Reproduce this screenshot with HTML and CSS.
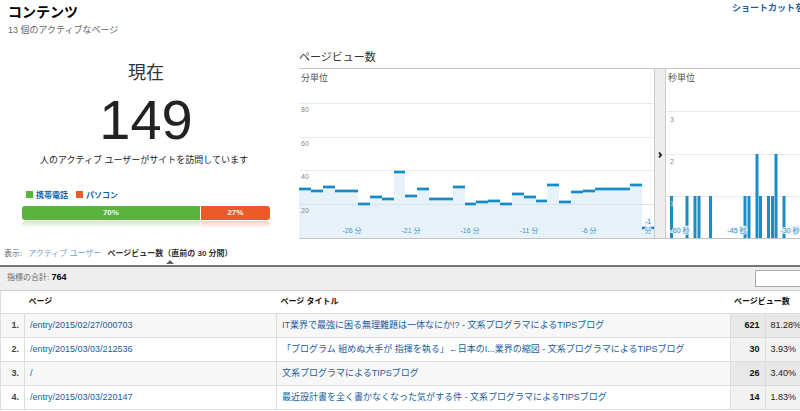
FILE: index.html
```html
<!DOCTYPE html>
<html lang="ja">
<head>
    <meta charset="UTF-8">
    <meta name="viewport" content="width=device-width, initial-scale=1.0">
    <title>コンテンツ</title>
    <link rel="stylesheet" href="styles.css">
</head>
<body>
    <header class="page-header">
        <div>
            <h1>コンテンツ</h1>
            <p class="subtitle">13 個のアクティブなページ</p>
        </div>
        <a class="shortcut" href="#shortcut">ショートカットを</a>
    </header>

    <main>
        <div class="overview">
            <section class="active-users">
                <h2>現在</h2>
                <p class="count">149</p>
                <p class="note">人のアクティブ ユーザーがサイトを訪問しています</p>
                <div class="legend">
                    <a class="mobile" href="#mobile">携帯電話</a>
                    <a class="desktop" href="#desktop">パソコン</a>
                </div>
                <div class="share">
                    <span class="share-mobile">70%</span>
                    <span class="share-desktop">27%</span>
                </div>
                <div class="reflection">
                    <span class="share-mobile"></span>
                    <span class="share-desktop"></span>
                </div>
            </section>

            <section class="pageviews">
                <h2>ページビュー数</h2>
                <div class="charts">
                    <svg class="minutes" viewBox="0 0 355 169" role="img" aria-label="分単位">
                        <path class="grid" d="M0 34.5H355M0 68.5H355M0 101.5H355"/>
                        <path class="area" d="M0 170V120H12V122H24V118H36V122H59V135H71V128H83V130H95V103H106V127H118V120H130V130H154V118H166V135H177V133H189V132H201V135H213V125H225V128H237V132H248V116H260V133H272V123H284V122H296V120H331V116H343V159H355V170Z"/>
                        <path class="grid grid-over" d="M0 135.5H355"/>
                        <path class="tick-halo" d="M0 120H12M12 122H24M24 118H36M36 122H59M59 135H71M71 128H83M83 130H95M95 103H106M106 127H118M118 120H130M130 130H154M154 118H166M166 135H177M177 133H189M189 132H201M201 135H213M213 125H225M225 128H237M237 132H248M248 116H260M260 133H272M272 123H284M284 122H296M296 120H331M331 116H343M343 159H355"/>
                        <path class="tick" d="M0 120H12M12 122H24M24 118H36M36 122H59M59 135H71M71 128H83M83 130H95M95 103H106M106 127H118M118 120H130M130 130H154M154 118H166M166 135H177M177 133H189M189 132H201M201 135H213M213 125H225M225 128H237M237 132H248M248 116H260M260 133H272M272 123H284M284 122H296M296 120H331M331 116H343M343 159H355"/>
                        <text class="name" x="2" y="12">分単位</text>
                        <text class="value" x="2" y="43">80</text>
                        <text class="value" x="2" y="77">60</text>
                        <text class="value" x="2" y="110">40</text>
                        <text class="value" x="2" y="144">20</text>
                        <text class="time" x="53" y="164">-26 分</text>
                        <text class="time" x="112" y="164">-21 分</text>
                        <text class="time" x="171" y="164">-16 分</text>
                        <text class="time" x="230" y="164">-11 分</text>
                        <text class="time" x="290" y="164">-6 分</text>
                        <text class="time" x="349" y="155">-1</text>
                        <text class="time" x="349" y="164">分</text>
                    </svg>
                    <button class="toggle" type="button" aria-label="切り替え">
                        <svg viewBox="0 0 4 6"><path d="M1 0.5L3 3L1 5.5"/></svg>
                    </button>
                    <svg class="seconds" viewBox="0 0 134 169" preserveAspectRatio="xMinYMin slice" role="img" aria-label="秒単位">
                        <path class="grid" d="M0 42.5H134M0 85.5H134M0 127.5H134"/>
                        <path class="bars" d="M4 127h3v43h-3zM19.500 127h3v43h-3zM27.500 127h3v43h-3zM31.500 127h3v43h-3zM43 127h3v43h-3zM77.500 127h3v43h-3zM81.500 127h3v43h-3zM89.500 85h3v85h-3zM93 127h3v43h-3zM101 127h3v43h-3zM105 127h3v43h-3zM108.500 85h3v85h-3zM116.500 127h3v43h-3z"/>
                        <text class="name" x="2" y="12">秒単位</text>
                        <text class="value" x="4" y="53">3</text>
                        <text class="value" x="4" y="95">2</text>
                        <text class="value value-over" x="4" y="137">1</text>
                        <text class="time" x="14" y="164">-60 秒</text>
                        <text class="time" x="71" y="164">-45 秒</text>
                        <text class="time" x="124" y="164">-30 秒</text>
                    </svg>
                </div>
            </section>
        </div>

        <nav class="view">
            <span>表示:</span>
            <a href="#users">アクティブ ユーザー</a>
            <strong>ページビュー数（直前の 30 分間）</strong>
        </nav>

        <div class="toolbar">
            <p>指標の合計: <strong>764</strong></p>
            <input type="text" aria-label="検索">
        </div>

        <table class="pages">
            <thead>
                <tr>
                    <th class="num"></th>
                    <th class="path">ページ</th>
                    <th class="title">ページ タイトル</th>
                    <th class="views" colspan="2">ページビュー数</th>
                </tr>
            </thead>
            <tbody>
                <tr>
                    <td class="num">1.</td>
                    <td><a href="#p1">/entry/2015/02/27/000703</a></td>
                    <td><a href="#t1">IT業界で最強に困る無理難題は一体なにか!? - 文系プログラマによるTIPSブログ</a></td>
                    <td class="total">621</td>
                    <td class="percent">81.28%</td>
                </tr>
                <tr>
                    <td class="num">2.</td>
                    <td><a href="#p2">/entry/2015/03/03/212536</a></td>
                    <td><a href="#t2">「プログラム 組めぬ大手が 指揮を執る」←日本のI...業界の縮図 - 文系プログラマによるTIPSブログ</a></td>
                    <td class="total">30</td>
                    <td class="percent">3.93%</td>
                </tr>
                <tr>
                    <td class="num">3.</td>
                    <td><a href="#p3">/</a></td>
                    <td><a href="#t3">文系プログラマによるTIPSブログ</a></td>
                    <td class="total">26</td>
                    <td class="percent">3.40%</td>
                </tr>
                <tr>
                    <td class="num">4.</td>
                    <td><a href="#p4">/entry/2015/03/03/220147</a></td>
                    <td><a href="#t4">最近設計書を全く書かなくなった気がする件 - 文系プログラマによるTIPSブログ</a></td>
                    <td class="total">14</td>
                    <td class="percent">1.83%</td>
                </tr>
            </tbody>
        </table>
    </main>
</body>
</html>
```

FILE: styles.css
```css
* {
    box-sizing: border-box;
}
body {
    font-family: "Liberation Sans", "Noto Sans CJK JP", sans-serif;
    font-size: 9px;
    line-height: 12px;
    color: #222;
    background: #fff;
    margin: 0;
}
h1, h2, p {
    margin: 0;
}
a {
    color: #15609f;
    text-decoration: none;
}
.page-header {
    display: flex;
    justify-content: space-between;
    height: 48px;
    padding: 2px 0 0 8px;
}
h1 {
    font-size: 14px;
    line-height: 20px;
    color: #000;
}
.subtitle {
    line-height: 16px;
    color: #666;
}
.shortcut {
    width: 68px;
    overflow: hidden;
    white-space: nowrap;
    font-weight: bold;
}
.overview {
    display: flex;
    min-height: 196px;
}
.active-users {
    flex: none;
    width: 299px;
    padding: 12px 29px 0 22px;
    text-align: center;
}
.active-users h2 {
    font-size: 18px;
    line-height: 26px;
    font-weight: normal;
    color: #333;
}
.count {
    font-size: 56px;
    line-height: 68px;
}
.note {
    padding-right: 4px;
}
.legend {
    display: flex;
    gap: 8px;
    padding: 24px 0 4px 4px;
    font-size: 8px;
    font-weight: bold;
}
.legend a::before {
    content: "";
    display: inline-block;
    width: 7px;
    height: 7px;
    margin-right: 3px;
    background: #5ab43c;
}
.legend .desktop::before {
    background: #ec5a29;
}
.share, .reflection {
    display: flex;
    gap: 1px;
    height: 14px;
    border-radius: 3px;
    overflow: hidden;
    color: #f4f4f4;
    font-size: 8px;
    font-weight: bold;
    line-height: 14px;
}
.share-mobile {
    flex: 72;
    background: #5ab43c;
}
.share-desktop {
    flex: 28;
    background: #ec5a29;
}
.reflection {
    height: 7px;
    margin-top: 1px;
    opacity: 0.3;
    -webkit-mask-image: linear-gradient(#000, transparent);
    mask-image: linear-gradient(#000, transparent);
}
.pageviews {
    flex: 1;
    min-width: 0;
}
.pageviews h2 {
    font-size: 11px;
    line-height: 18px;
    height: 20px;
    font-weight: normal;
    color: #333;
}
.charts {
    display: grid;
    grid-template-columns: 355fr 12px 134fr;
    border-top: 1px solid #c4c4c4;
    border-bottom: 1px solid #c4c4c4;
}
.charts > svg {
    display: block;
    width: 100%;
}
.toggle {
    padding: 0;
    border: 0;
    border-left: 1px solid #ccc;
    border-right: 1px solid #ccc;
    background: #ededed;
}
.toggle svg {
    width: 4px;
    height: 6px;
    fill: none;
    stroke: #222;
    stroke-width: 2;
    overflow: visible;
}
.grid {
    stroke: #ebebeb;
    fill: none;
}
.grid-over {
    stroke: #d8e4ea;
}
.area {
    fill: #e6f1f8;
}
.tick-halo {
    stroke: #a5d0ea;
    stroke-width: 4;
}
.tick {
    stroke: #168bc7;
    stroke-width: 2;
}
.bars {
    fill: #1a8cc6;
}
.name {
    font-size: 9px;
    fill: #555;
}
.value {
    font-size: 7px;
    fill: #888;
}
.value-over {
    fill: #ddd;
}
.time {
    font-size: 7px;
    fill: #3a94c4;
    stroke: #e9f3f9;
    stroke-width: 2;
    paint-order: stroke;
    text-anchor: middle;
}
.view {
    display: flex;
    gap: 6px;
    height: 21px;
    padding: 4px 4px 0;
    font-size: 8px;
    color: #666;
}
.view a {
    color: #6ba3cc;
}
.view strong {
    color: #333;
}
.view strong::after {
    content: "";
    display: block;
    width: 0;
    margin: 0 auto;
    border: 4px solid transparent;
    border-top: 0;
    border-bottom-color: #666;
}
.toolbar {
    display: flex;
    justify-content: space-between;
    height: 26px;
    padding: 3px 0 0 7px;
    border-top: 2px solid #777;
    border-bottom: 1px solid #ccc;
    background: #eee;
    color: #666;
    font-size: 8px;
}
.toolbar p {
    line-height: 14px;
}
.toolbar strong {
    font-size: 9px;
    color: #000;
}
.toolbar input {
    width: 45px;
    height: 17px;
    border: 1px solid #aaa;
    border-right: 0;
    background: #fff;
}
.pages {
    width: 100%;
    table-layout: fixed;
    border-collapse: collapse;
    border-left: 1px solid #ddd;
    border-bottom: 1px solid #ddd;
}
.pages th, .pages td {
    height: 24px;
    padding: 0 0 0 5px;
    text-align: left;
    white-space: nowrap;
}
.pages th {
    height: 22px;
    padding-left: 4px;
    font-size: 8px;
    color: #111;
}
.pages td {
    border-top: 1px solid #ddd;
    border-right: 1px solid #ddd;
}
.pages tbody tr:nth-child(odd) {
    background: #f7f7f7;
}
.pages .num {
    width: 24px;
    padding: 0 5px 0 0;
    text-align: right;
    font-weight: bold;
    color: #444;
}
.pages .path {
    width: 252px;
}
.pages .views {
    width: 70px;
}
.pages .total {
    width: 34px;
    padding: 0 5px 0 0;
    text-align: right;
    font-weight: bold;
    color: #111;
    background: #f2f2f2;
}
.pages .percent {
    border-right: 0;
    background: #f2f2f2;
}
.pages tr:nth-child(odd) .total,
.pages tr:nth-child(odd) .percent {
    background: #e8e8e8;
}
```
